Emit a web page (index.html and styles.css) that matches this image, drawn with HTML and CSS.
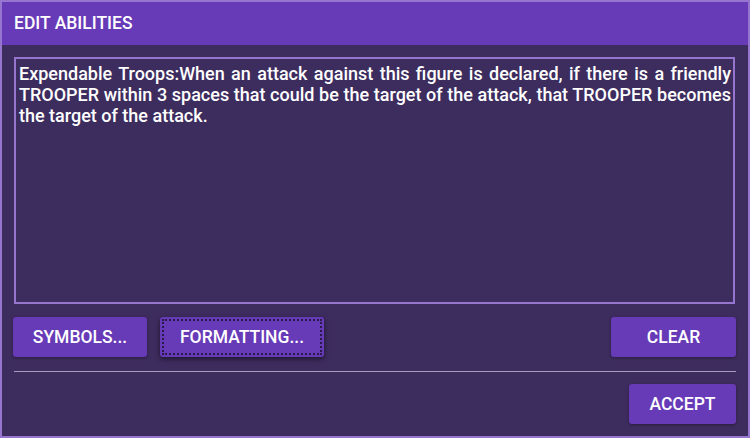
FILE: index.html
```html
<!DOCTYPE html>
<html>
<head>
<meta charset="utf-8">
<link rel="stylesheet" href="styles.css">
</head>
<body>
<div class="dialog">
  <div class="header">EDIT ABILITIES</div>
  <div class="content">
    <div class="editor">Expendable Troops:When an attack against this figure is declared, if there is a friendly TROOPER within 3 spaces that could be the target of the attack, that TROOPER becomes the target of the attack.</div>
    <div class="row">
      <button class="btn btn-symbols">SYMBOLS...</button>
      <button class="btn btn-formatting focused">FORMATTING...</button>
      <button class="btn btn-clear">CLEAR</button>
    </div>
    <div class="sep"></div>
    <div class="row row-end">
      <button class="btn btn-accept">ACCEPT</button>
    </div>
  </div>
</div>
</body>
</html>
```

FILE: styles.css
```css
html, body {
  margin: 0;
  padding: 0;
  background: #3d2c5e;
}
.dialog {
  width: 750px;
  height: 438px;
  box-sizing: border-box;
  border: 2px solid #9575cd;
  background: #3d2c5e;
  display: flex;
  flex-direction: column;
  font-family: Roboto, "Liberation Sans", sans-serif;
  color: #fff;
}
.header {
  height: 43px;
  line-height: 43px;
  background: #673ab7;
  padding-left: 12px;
  font-size: 17.5px;
  font-weight: 500;
}
.content {
  padding: 12px 12px 0 12px;
  display: flex;
  flex-direction: column;
}
.editor {
  height: 247px;
  box-sizing: border-box;
  border: 2px solid #9575cd;
  margin-right: 1px;
  padding: 4px 2px 0 3px;
  font-size: 18px;
  font-weight: 500;
  line-height: 21px;
  text-align: justify;
}
.row {
  display: flex;
  gap: 13px;
  margin-top: 13px;
}
.row-end {
  justify-content: flex-end;
  margin-top: 12px;
}
.btn {
  height: 40px;
  border: none;
  border-radius: 3px;
  background: #673ab7;
  color: #fff;
  font-family: Roboto, "Liberation Sans", sans-serif;
  font-size: 17.5px;
  font-weight: 500;
  padding: 0;
  box-shadow: 0 1px 3px rgba(0,0,0,0.35);
  position: relative;
}
.btn-symbols { width: 134px; margin-left: -1px; }
.btn-formatting { width: 164px; }
.btn-clear { width: 125px; margin-left: auto; }
.btn-accept { width: 107px; }
.focused {
  box-shadow: 0 2px 5px rgba(0,0,0,0.5);
}
.focused::after {
  content: "";
  position: absolute;
  inset: 2px;
  border: 2px dotted #2a1a4a;
  border-radius: 1px;
}
.sep {
  height: 1px;
  background: #a99bbd;
  margin-top: 14px;
}
```
